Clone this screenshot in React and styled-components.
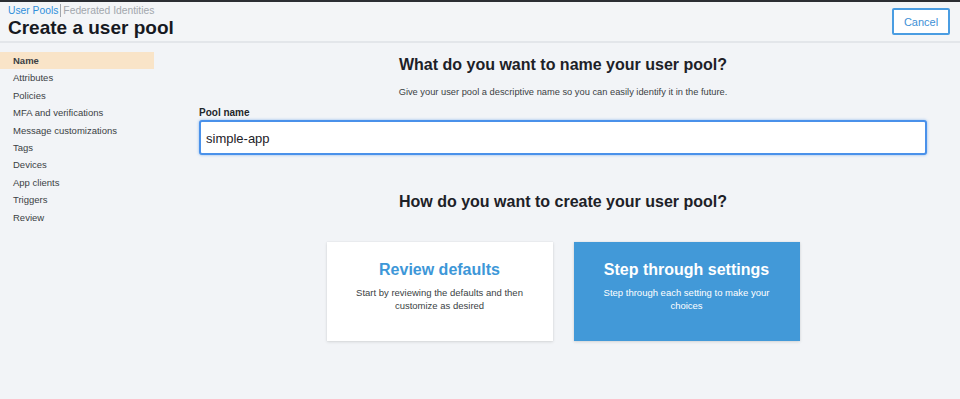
import React from 'react';
import styled, { createGlobalStyle } from 'styled-components';

const GlobalStyle = createGlobalStyle`
  html, body {
    margin: 0;
    padding: 0;
    background: #f2f4f7;
    font-family: "Liberation Sans", Arial, sans-serif;
    color: #232f3e;
  }
`;

const Page = styled.div`
  width: 960px;
  height: 399px;
  overflow: hidden;
  background: #f2f4f7;
  border-top: 2px solid #2b2e33;
  box-sizing: border-box;
`;

const Header = styled.header`
  display: flex;
  justify-content: space-between;
  align-items: flex-start;
  height: 39px;
  padding: 0 10px 0 8px;
  border-bottom: 2px solid #e3e6ea;
  background: #f3f5f7;
`;

const Crumbs = styled.div`
  display: flex;
  align-items: center;
  font-size: 10.3px;
  line-height: 13px;
  padding-top: 2px;
`;

const Crumb = styled.a`
  color: ${({ active }) => (active ? '#2f8fdb' : '#a2a7ad')};
  text-decoration: none;
  padding-right: ${({ active }) => (active ? '2px' : '0')};
  border-right: ${({ active }) => (active ? '1px solid #a2a7ad' : 'none')};
  margin-right: 2px;
`;

const Title = styled.h1`
  margin: 0;
  font-size: 19px;
  line-height: 22px;
  font-weight: 700;
  color: #16191f;
`;

const CancelButton = styled.button`
  margin-top: 6px;
  width: 58px;
  height: 27px;
  background: #fff;
  border: 2px solid #4a9de2;
  border-radius: 2px;
  color: #3d8fd6;
  font-family: inherit;
  font-size: 11px;
  padding: 0;
`;

const Body = styled.div`
  display: flex;
`;

const Sidebar = styled.nav`
  width: 154px;
  padding-top: 9px;
  flex-shrink: 0;
`;

const NavItem = styled.div`
  height: 17.4px;
  line-height: 17.4px;
  padding-left: 13px;
  font-size: 9.5px;
  color: #3b3f44;
  font-weight: ${({ active }) => (active ? 700 : 400)};
  background: ${({ active }) => (active ? '#f9e4c8' : 'transparent')};
`;

const Main = styled.main`
  flex: 1;
  padding: 0 33px 0 45px;
  display: flex;
  flex-direction: column;
  align-items: center;
`;

const Question = styled.h2`
  margin: 0;
  font-size: 16px;
  line-height: 20px;
  font-weight: 700;
  color: #1d2127;
  padding-top: ${({ top }) => top}px;
`;

const Hint = styled.p`
  margin: 10px 0 0;
  font-size: 9.3px;
  line-height: 14px;
  color: #3b3f44;
`;

const Field = styled.div`
  align-self: stretch;
  margin-top: 7px;
`;

const Label = styled.label`
  display: block;
  font-size: 10px;
  font-weight: 700;
  line-height: 13px;
  color: #22262b;
  margin-bottom: 1px;
`;

const Input = styled.input`
  box-sizing: border-box;
  width: 100%;
  height: 35px;
  border: 2px solid #4a91ea;
  border-radius: 3px;
  box-shadow: 0 0 3px rgba(74, 145, 234, 0.6);
  padding: 1px 6px 0 5px;
  font-family: inherit;
  font-size: 13px;
  color: #1d2127;
  background: #fff;
  outline: none;
  caret-color: #1d2127;
`;

const Options = styled.div`
  display: flex;
  gap: 21px;
  margin-top: 30px;
`;

const Option = styled.div`
  box-sizing: border-box;
  width: 226px;
  height: 99px;
  padding: 18px 16px 0;
  text-align: center;
  background: ${({ primary }) => (primary ? '#4299d8' : '#ffffff')};
  box-shadow: 0 1px 3px rgba(0, 0, 0, 0.12), 0 0 1px rgba(0, 0, 0, 0.1);
`;

const OptionTitle = styled.div`
  font-size: 16px;
  line-height: 20px;
  font-weight: 700;
  color: ${({ primary }) => (primary ? '#ffffff' : '#3d97d8')};
`;

const OptionText = styled.div`
  margin-top: 6px;
  font-size: 9.5px;
  line-height: 13px;
  color: ${({ primary }) => (primary ? '#ffffff' : '#3b3f44')};
`;

const navItems = [
  'Name',
  'Attributes',
  'Policies',
  'MFA and verifications',
  'Message customizations',
  'Tags',
  'Devices',
  'App clients',
  'Triggers',
  'Review',
];

export default function App() {
  return (
    <Page>
      <GlobalStyle />
      <Header>
        <div>
          <Crumbs>
            <Crumb active>User Pools</Crumb>
            <Crumb>Federated Identities</Crumb>
          </Crumbs>
          <Title>Create a user pool</Title>
        </div>
        <CancelButton>Cancel</CancelButton>
      </Header>
      <Body>
        <Sidebar>
          {navItems.map((item, i) => (
            <NavItem key={item} active={i === 0}>
              {item}
            </NavItem>
          ))}
        </Sidebar>
        <Main>
          <Question top={12}>What do you want to name your user pool?</Question>
          <Hint>Give your user pool a descriptive name so you can easily identify it in the future.</Hint>
          <Field>
            <Label>Pool name</Label>
            <Input defaultValue="simple-app" />
          </Field>
          <Question top={37}>How do you want to create your user pool?</Question>
          <Options>
            <Option>
              <OptionTitle>Review defaults</OptionTitle>
              <OptionText>
                Start by reviewing the defaults and then
                <br />
                customize as desired
              </OptionText>
            </Option>
            <Option primary>
              <OptionTitle primary>Step through settings</OptionTitle>
              <OptionText primary>
                Step through each setting to make your
                <br />
                choices
              </OptionText>
            </Option>
          </Options>
        </Main>
      </Body>
    </Page>
  );
}
